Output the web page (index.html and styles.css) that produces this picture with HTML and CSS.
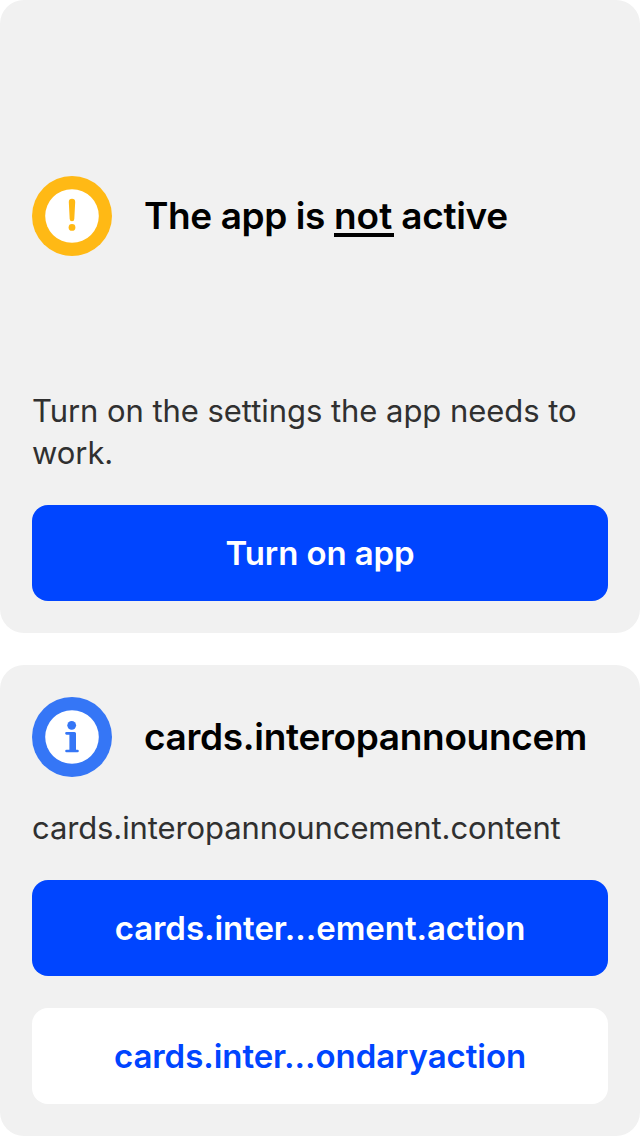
FILE: index.html
```html
<!DOCTYPE html>
<html lang="en">
<head>
<meta charset="utf-8">
<title>App status</title>
<link rel="stylesheet" href="styles.css">
</head>
<body>
<main class="cards">
  <section class="card card-status">
    <header class="card-header header-tall">
      <svg class="icon" viewBox="0 0 80 80"><circle cx="40" cy="40" r="40" fill="#ffb915"/><circle cx="40" cy="40" r="26.8" fill="#fff"/><path d="M36.8 26a3.2 3.2 0 0 1 6.4 0L42.3 43a2.3 2.3 0 0 1-4.6 0z" fill="#ffb915"/><circle cx="40" cy="51.4" r="3.4" fill="#ffb915"/></svg>
      <h1 class="title"><span class="lead">The app is </span><u>not</u><span class="tail"> active</span></h1>
    </header>
    <p class="text instructions">Turn on the settings the app needs to work.</p>
    <button class="button primary turn-on">Turn on app</button>
  </section>
  <section class="card card-announcement">
    <header class="card-header">
      <svg class="icon" viewBox="0 0 80 80"><circle cx="40" cy="40" r="40" fill="#3576f6"/><circle cx="40" cy="40" r="26.8" fill="#fff"/><circle cx="39.7" cy="28.3" r="4.4" fill="#3576f6"/><path d="M34.5 35H42.5Q44 35 44 36.5V52.7H45.5A1.3 1.3 0 0 1 45.5 55.3H34.5A1.3 1.3 0 0 1 34.5 52.7H37.4V37.7H34.5A1.3 1.3 0 0 1 34.5 35z" fill="#3576f6"/></svg>
      <h2 class="title tight">cards.interopannouncem</h2>
    </header>
    <p class="text single">cards.interopannouncement.content</p>
    <button class="button primary">cards.inter...ement.action</button>
    <button class="button secondary">cards.inter...ondaryaction</button>
  </section>
</main>
</body>
</html>
```
FILE: styles.css
```css
* { box-sizing: border-box; }
body { margin: 0; background: #fff; font-family: Inter, "Liberation Sans", sans-serif; color: #000; }
.cards { display: flex; flex-direction: column; gap: 32px; }
.card { background: #f1f1f1; border-radius: 24px; padding: 32px; display: flex; flex-direction: column; }
.card-status { height: 633px; padding-top: 0; }
.card-announcement { height: 471px; }
.card-header { display: flex; align-items: center; gap: 32px; height: 80px; flex: none; }
.header-tall { height: 390px; padding-top: 42px; }
.icon { width: 80px; height: 80px; flex: none; }
.title { margin: 0; font-size: 37px; font-weight: 600; line-height: 48px; white-space: nowrap; }
.lead { letter-spacing: -0.4px; }
.title u { padding-right: 2px; margin-right: -2px; text-decoration: none; background: linear-gradient(#000, #000) 0 calc(100% - 1px) / 100% 4px no-repeat; }
.tail { letter-spacing: -0.3px; }
.tight { letter-spacing: -0.32px; }
.text { margin: 0; color: #303030; font-size: 31px; line-height: 42px; letter-spacing: -0.05px; }
.instructions { height: 115px; font-variant-ligatures: none; font-feature-settings: "calt" 0; }
.single { margin-top: 30px; height: 73px; letter-spacing: -0.11px; }
.button { border: 0; border-radius: 16px; height: 96px; flex: none; font: 600 33px Inter, "Liberation Sans", sans-serif; letter-spacing: -0.06px; }
.turn-on { letter-spacing: -0.12px; }
.primary { background: #0045ff; color: #fff; }
.secondary { background: #fff; color: #0045ff; margin-top: 32px; }
```
